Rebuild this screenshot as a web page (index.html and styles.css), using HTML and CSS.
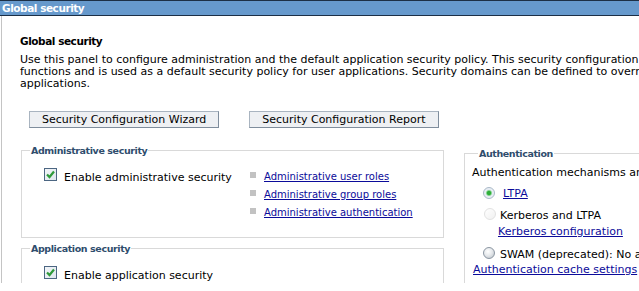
FILE: index.html
```html
<!DOCTYPE html>
<html>
<head>
<meta charset="utf-8">
<link rel="stylesheet" href="styles.css">
</head>
<body>
<div class="page">
  <div class="titlebar">Global security</div>
  <div class="panel">
    <h1 class="heading">Global security</h1>
    <p class="desc">Use this panel to configure administration and the default application security policy. This security configuration applies to the security policy for all administrative<br>functions and is used as a default security policy for user applications. Security domains can be defined to override and customize the security policies for user<br>applications.</p>
    <div class="buttons">
      <button class="btn">Security Configuration Wizard</button>
      <button class="btn">Security Configuration Report</button>
    </div>
    <div class="columns">
      <div class="leftcol">
        <fieldset class="box admin">
          <legend>Administrative security</legend>
          <div class="adminrow">
            <label class="check"><span class="cb"><svg width="11" height="11" viewBox="0 0 11 11"><path d="M2 5.5 L4.5 8 L9 2.5" fill="none" stroke="#2f9a3a" stroke-width="2.2"/></svg></span><span class="cbtext">Enable administrative security</span></label>
            <ul class="links">
              <li><a href="#">Administrative user roles</a></li>
              <li><a href="#">Administrative group roles</a></li>
              <li><a href="#">Administrative authentication</a></li>
            </ul>
          </div>
        </fieldset>
        <fieldset class="box app">
          <legend>Application security</legend>
          <label class="check"><span class="cb"><svg width="11" height="11" viewBox="0 0 11 11"><path d="M2 5.5 L4.5 8 L9 2.5" fill="none" stroke="#2f9a3a" stroke-width="2.2"/></svg></span><span class="cbtext">Enable application security</span></label>
        </fieldset>
      </div>
      <div class="rightcol">
        <fieldset class="box auth">
          <legend>Authentication</legend>
          <div class="authtext">Authentication mechanisms and expiration</div>
          <div class="radio r1"><span class="rb on"></span><a href="#">LTPA</a></div>
          <div class="radio r2"><span class="rb off"></span><span class="rtext">Kerberos and LTPA</span></div>
          <div class="sublink"><a href="#">Kerberos configuration</a></div>
          <div class="radio r3"><span class="rb grey"></span><span class="rtext">SWAM (deprecated): No authentication</span></div>
          <div class="cachelink"><a href="#">Authentication cache settings</a></div>
        </fieldset>
      </div>
    </div>
  </div>
</div>
</body>
</html>
```
FILE: styles.css
```css
* { box-sizing: border-box; }
html, body { margin: 0; padding: 0; background: #fff; }
body { font-family: "DejaVu Sans", Verdana, sans-serif; font-size: 11px; color: #000; }
.page { width: 639px; height: 283px; overflow: hidden; }
.titlebar {
  height: 16px;
  background: #6699cc;
  border-top: 1px solid #1c2f45;
  border-bottom: 1px solid #1c2f45;
  color: #fff;
  font-weight: bold;
  font-size: 10.5px;
  letter-spacing: -0.45px;
  line-height: 14px;
  padding-left: 2px;
  white-space: nowrap;
}
.panel {
  border-left: 1px solid #c4c4c4;
  margin-left: 1px;
  height: 267px;
  padding-left: 18px;
  padding-top: 19px;
  white-space: nowrap;
}
.heading {
  margin: 0;
  font-size: 10.5px;
  letter-spacing: -0.45px;
  font-weight: bold;
  line-height: 12px;
}
.desc {
  margin: 7px 0 0 0;
  line-height: 12px;
}
.buttons { margin-top: 21px; display: flex; gap: 30px; padding-left: 9px; }
.btn {
  font-family: inherit;
  font-size: 11px;
  height: 17px;
  padding: 0 12px;
  margin: 0;
  background: #eef0f3;
  border: 1px solid #7f8d9c;
  border-top-color: #a9b4c0;
  border-left-color: #a9b4c0;
  color: #000;
  line-height: 15px;
}
.columns { display: flex; margin-top: 15px; align-items: flex-start; }
.leftcol { width: 424px; flex: none; padding-left: 1px; }
.rightcol { margin-left: 20px; width: 400px; flex: none; padding-top: 3px; }
.box {
  border: 1px solid #d9d9d9;
  margin: 0;
  padding: 0;
  min-width: 0;
}
.box legend {
  color: #2f4d6d;
  font-weight: bold;
  font-size: 9.5px;
  letter-spacing: -0.4px;
  padding: 2px 1px 0 1px;
  margin-left: 8px;
  line-height: 12px;
}
.admin { height: 95px; }
.adminrow { display: flex; padding-left: 22px; padding-top: 11px; }
.check { display: flex; align-items: flex-start; width: 206px; flex: none; }
.cb {
  width: 13px; height: 13px;
  border: 1px solid #4c6682;
  background: linear-gradient(135deg, #f2f5f8, #dfe6ee);
  margin-right: 7px;
  display: inline-flex; align-items: center; justify-content: center;
  flex: none;
}
.cbtext { line-height: 13px; padding-top: 3px; }
.links { list-style: none; margin: 0; padding: 0; font-size: 10px; }
.links li { display: flex; align-items: center; height: 18px; margin-top: 0; }
.links li:first-child { margin-top: -1px; }
.links li::before {
  content: ""; width: 6px; height: 6px; background: #c2c2c2; margin-right: 8px; margin-top: -3px; flex: none;
}
a { color: #0b0b9a; text-decoration: underline; }
.app { margin-top: 3px; height: 60px; }
.app .check { margin-left: 22px; margin-top: 11px; }
.auth { height: 140px; padding-left: 7px; }
.auth legend { margin-left: 6px; }
.authtext { margin-top: 6px; line-height: 13px; }
.radio { display: flex; align-items: flex-start; line-height: 13px; }
.rb {
  width: 12px; height: 12px; border-radius: 50%;
  display: inline-block;
  flex: none;
}
.rb.on {
  border: 1px solid #a9b8c8;
  background: radial-gradient(circle, #2fae3a 0 1.8px, #8fd89a 2.6px, #e4ebf2 3.4px, #f4f7fa 100%);
  margin-right: 8px;
}
.rb.off { border: 1px solid #e2e2e2; background: linear-gradient(135deg, #ffffff, #f0f0f0); margin-right: 4px; margin-left: 1px; }
.rb.grey { border: 1px solid #8b96a2; background: radial-gradient(circle at 40% 35%, #ffffff 0, #e6e9ec 45%, #b8bfc6 100%); margin-right: 5px; }
.r1 { margin-top: 8px; padding-left: 11px; }
.r2 { margin-top: 8px; padding-left: 11px; }
.r2 .rtext { padding-top: 1px; }
.sublink { margin-top: 3px; padding-left: 26px; line-height: 13px; }
.r3 { margin-top: 9px; padding-left: 11px; }
.r3 .rtext { padding-top: 1px; }
.cachelink { margin-top: 2px; line-height: 13px; padding-left: 1px; }
```
